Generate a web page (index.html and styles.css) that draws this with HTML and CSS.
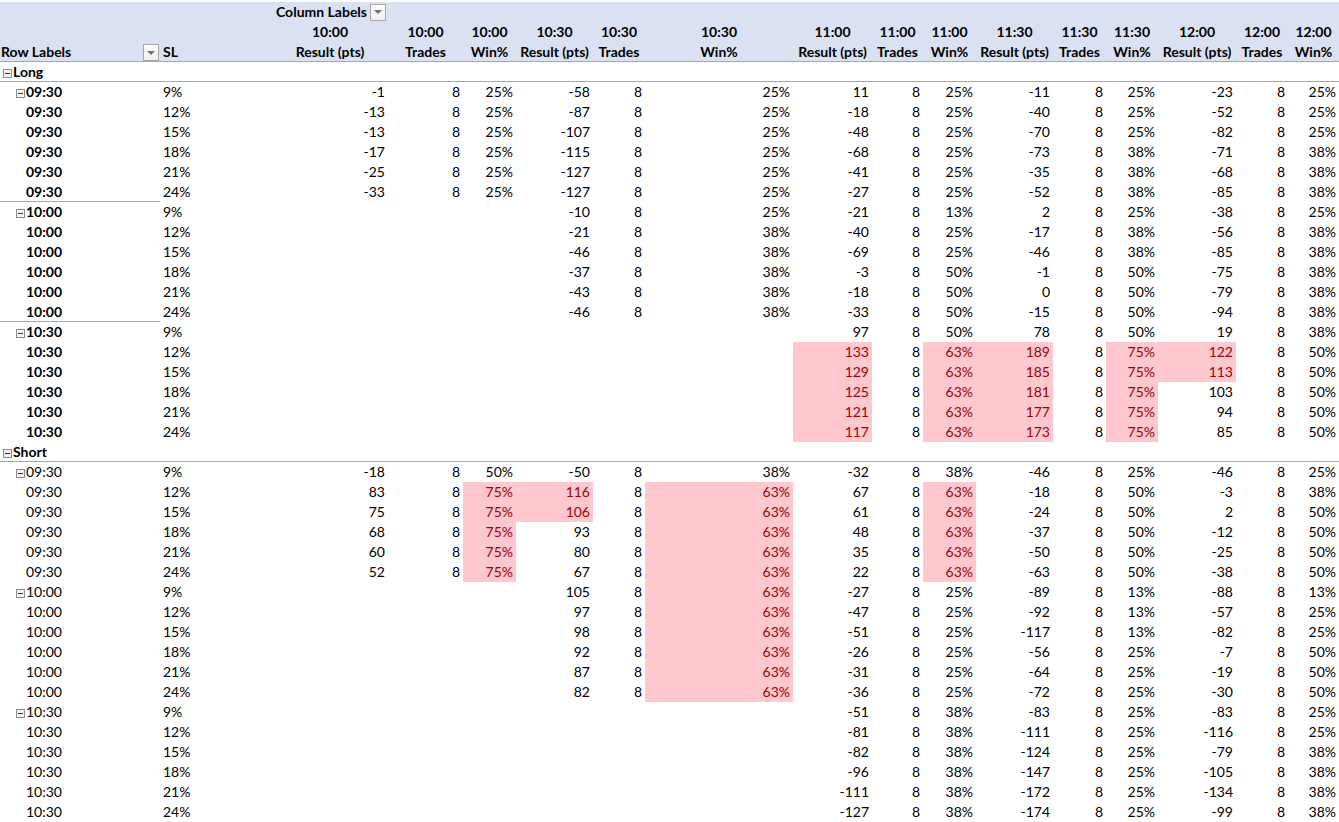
FILE: index.html
```html
<!DOCTYPE html>
<html>
<head>
<meta charset="utf-8">
<link rel="stylesheet" href="styles.css">
</head>
<body>
<table class="pivot">
<colgroup>
<col style="width:160px"><col style="width:112px"><col style="width:116px"><col style="width:75px"><col style="width:53px"><col style="width:77px"><col style="width:52px"><col style="width:148px"><col style="width:79px"><col style="width:51px"><col style="width:53px"><col style="width:77px"><col style="width:53px"><col style="width:52px"><col style="width:78px"><col style="width:52px"><col style="width:51px">
</colgroup>
<thead>
<tr class="hr1"><th></th><th></th><th class="cl"><div class="clwrap"><span>Column Labels</span><span class="dd"></span></div></th><th></th><th></th><th></th><th></th><th></th><th></th><th></th><th></th><th></th><th></th><th></th><th></th><th></th><th></th></tr>
<tr class="hr2">
<th class="rl"><div class="rlwrap"><span>Row Labels</span><span class="dd"></span></div></th>
<th class="sl">SL</th>
<th>10:00<br>Result (pts)</th><th>10:00<br>Trades</th><th>10:00<br>Win%</th>
<th>10:30<br>Result (pts)</th><th>10:30<br>Trades</th><th>10:30<br>Win%</th>
<th>11:00<br>Result (pts)</th><th>11:00<br>Trades</th><th>11:00<br>Win%</th>
<th>11:30<br>Result (pts)</th><th>11:30<br>Trades</th><th>11:30<br>Win%</th>
<th>12:00<br>Result (pts)</th><th>12:00<br>Trades</th><th>12:00<br>Win%</th>
</tr>
</thead>
<tbody>
<tr class="grp"><td class="l0 b"><span class="tog"></span>Long</td><td></td><td></td><td></td><td></td><td></td><td></td><td></td><td></td><td></td><td></td><td></td><td></td><td></td><td></td><td></td><td></td></tr>

<tr><td class="l1 b"><span class="tog"></span>09:30</td><td class="s">9%</td><td class="n">-1</td><td class="n">8</td><td class="n">25%</td><td class="n">-58</td><td class="n">8</td><td class="n">25%</td><td class="n">11</td><td class="n">8</td><td class="n">25%</td><td class="n">-11</td><td class="n">8</td><td class="n">25%</td><td class="n">-23</td><td class="n">8</td><td class="n">25%</td></tr>
<tr><td class="l2 b">09:30</td><td class="s">12%</td><td class="n">-13</td><td class="n">8</td><td class="n">25%</td><td class="n">-87</td><td class="n">8</td><td class="n">25%</td><td class="n">-18</td><td class="n">8</td><td class="n">25%</td><td class="n">-40</td><td class="n">8</td><td class="n">25%</td><td class="n">-52</td><td class="n">8</td><td class="n">25%</td></tr>
<tr><td class="l2 b">09:30</td><td class="s">15%</td><td class="n">-13</td><td class="n">8</td><td class="n">25%</td><td class="n">-107</td><td class="n">8</td><td class="n">25%</td><td class="n">-48</td><td class="n">8</td><td class="n">25%</td><td class="n">-70</td><td class="n">8</td><td class="n">25%</td><td class="n">-82</td><td class="n">8</td><td class="n">25%</td></tr>
<tr><td class="l2 b">09:30</td><td class="s">18%</td><td class="n">-17</td><td class="n">8</td><td class="n">25%</td><td class="n">-115</td><td class="n">8</td><td class="n">25%</td><td class="n">-68</td><td class="n">8</td><td class="n">25%</td><td class="n">-73</td><td class="n">8</td><td class="n">38%</td><td class="n">-71</td><td class="n">8</td><td class="n">38%</td></tr>
<tr><td class="l2 b">09:30</td><td class="s">21%</td><td class="n">-25</td><td class="n">8</td><td class="n">25%</td><td class="n">-127</td><td class="n">8</td><td class="n">25%</td><td class="n">-41</td><td class="n">8</td><td class="n">25%</td><td class="n">-35</td><td class="n">8</td><td class="n">38%</td><td class="n">-68</td><td class="n">8</td><td class="n">38%</td></tr>
<tr><td class="l2 b sep">09:30</td><td class="s">24%</td><td class="n">-33</td><td class="n">8</td><td class="n">25%</td><td class="n">-127</td><td class="n">8</td><td class="n">25%</td><td class="n">-27</td><td class="n">8</td><td class="n">25%</td><td class="n">-52</td><td class="n">8</td><td class="n">38%</td><td class="n">-85</td><td class="n">8</td><td class="n">38%</td></tr>

<tr><td class="l1 b"><span class="tog"></span>10:00</td><td class="s">9%</td><td></td><td></td><td></td><td class="n">-10</td><td class="n">8</td><td class="n">25%</td><td class="n">-21</td><td class="n">8</td><td class="n">13%</td><td class="n">2</td><td class="n">8</td><td class="n">25%</td><td class="n">-38</td><td class="n">8</td><td class="n">25%</td></tr>
<tr><td class="l2 b">10:00</td><td class="s">12%</td><td></td><td></td><td></td><td class="n">-21</td><td class="n">8</td><td class="n">38%</td><td class="n">-40</td><td class="n">8</td><td class="n">25%</td><td class="n">-17</td><td class="n">8</td><td class="n">38%</td><td class="n">-56</td><td class="n">8</td><td class="n">38%</td></tr>
<tr><td class="l2 b">10:00</td><td class="s">15%</td><td></td><td></td><td></td><td class="n">-46</td><td class="n">8</td><td class="n">38%</td><td class="n">-69</td><td class="n">8</td><td class="n">25%</td><td class="n">-46</td><td class="n">8</td><td class="n">38%</td><td class="n">-85</td><td class="n">8</td><td class="n">38%</td></tr>
<tr><td class="l2 b">10:00</td><td class="s">18%</td><td></td><td></td><td></td><td class="n">-37</td><td class="n">8</td><td class="n">38%</td><td class="n">-3</td><td class="n">8</td><td class="n">50%</td><td class="n">-1</td><td class="n">8</td><td class="n">50%</td><td class="n">-75</td><td class="n">8</td><td class="n">38%</td></tr>
<tr><td class="l2 b">10:00</td><td class="s">21%</td><td></td><td></td><td></td><td class="n">-43</td><td class="n">8</td><td class="n">38%</td><td class="n">-18</td><td class="n">8</td><td class="n">50%</td><td class="n">0</td><td class="n">8</td><td class="n">50%</td><td class="n">-79</td><td class="n">8</td><td class="n">38%</td></tr>
<tr><td class="l2 b sep">10:00</td><td class="s">24%</td><td></td><td></td><td></td><td class="n">-46</td><td class="n">8</td><td class="n">38%</td><td class="n">-33</td><td class="n">8</td><td class="n">50%</td><td class="n">-15</td><td class="n">8</td><td class="n">50%</td><td class="n">-94</td><td class="n">8</td><td class="n">38%</td></tr>

<tr><td class="l1 b"><span class="tog"></span>10:30</td><td class="s">9%</td><td></td><td></td><td></td><td></td><td></td><td></td><td class="n">97</td><td class="n">8</td><td class="n">50%</td><td class="n">78</td><td class="n">8</td><td class="n">50%</td><td class="n">19</td><td class="n">8</td><td class="n">38%</td></tr>
<tr><td class="l2 b">10:30</td><td class="s">12%</td><td></td><td></td><td></td><td></td><td></td><td></td><td class="n p">133</td><td class="n">8</td><td class="n p">63%</td><td class="n p">189</td><td class="n">8</td><td class="n p">75%</td><td class="n p">122</td><td class="n">8</td><td class="n">50%</td></tr>
<tr><td class="l2 b">10:30</td><td class="s">15%</td><td></td><td></td><td></td><td></td><td></td><td></td><td class="n p">129</td><td class="n">8</td><td class="n p">63%</td><td class="n p">185</td><td class="n">8</td><td class="n p">75%</td><td class="n p">113</td><td class="n">8</td><td class="n">50%</td></tr>
<tr><td class="l2 b">10:30</td><td class="s">18%</td><td></td><td></td><td></td><td></td><td></td><td></td><td class="n p">125</td><td class="n">8</td><td class="n p">63%</td><td class="n p">181</td><td class="n">8</td><td class="n p">75%</td><td class="n">103</td><td class="n">8</td><td class="n">50%</td></tr>
<tr><td class="l2 b">10:30</td><td class="s">21%</td><td></td><td></td><td></td><td></td><td></td><td></td><td class="n p">121</td><td class="n">8</td><td class="n p">63%</td><td class="n p">177</td><td class="n">8</td><td class="n p">75%</td><td class="n">94</td><td class="n">8</td><td class="n">50%</td></tr>
<tr><td class="l2 b">10:30</td><td class="s">24%</td><td></td><td></td><td></td><td></td><td></td><td></td><td class="n p">117</td><td class="n">8</td><td class="n p">63%</td><td class="n p">173</td><td class="n">8</td><td class="n p">75%</td><td class="n">85</td><td class="n">8</td><td class="n">50%</td></tr>

<tr class="grp"><td class="l0 b"><span class="tog"></span>Short</td><td></td><td></td><td></td><td></td><td></td><td></td><td></td><td></td><td></td><td></td><td></td><td></td><td></td><td></td><td></td><td></td></tr>

<tr><td class="l1"><span class="tog"></span>09:30</td><td class="s">9%</td><td class="n">-18</td><td class="n">8</td><td class="n">50%</td><td class="n">-50</td><td class="n">8</td><td class="n">38%</td><td class="n">-32</td><td class="n">8</td><td class="n">38%</td><td class="n">-46</td><td class="n">8</td><td class="n">25%</td><td class="n">-46</td><td class="n">8</td><td class="n">25%</td></tr>
<tr><td class="l2">09:30</td><td class="s">12%</td><td class="n">83</td><td class="n">8</td><td class="n p">75%</td><td class="n p">116</td><td class="n">8</td><td class="n p">63%</td><td class="n">67</td><td class="n">8</td><td class="n p">63%</td><td class="n">-18</td><td class="n">8</td><td class="n">50%</td><td class="n">-3</td><td class="n">8</td><td class="n">38%</td></tr>
<tr><td class="l2">09:30</td><td class="s">15%</td><td class="n">75</td><td class="n">8</td><td class="n p">75%</td><td class="n p">106</td><td class="n">8</td><td class="n p">63%</td><td class="n">61</td><td class="n">8</td><td class="n p">63%</td><td class="n">-24</td><td class="n">8</td><td class="n">50%</td><td class="n">2</td><td class="n">8</td><td class="n">50%</td></tr>
<tr><td class="l2">09:30</td><td class="s">18%</td><td class="n">68</td><td class="n">8</td><td class="n p">75%</td><td class="n">93</td><td class="n">8</td><td class="n p">63%</td><td class="n">48</td><td class="n">8</td><td class="n p">63%</td><td class="n">-37</td><td class="n">8</td><td class="n">50%</td><td class="n">-12</td><td class="n">8</td><td class="n">50%</td></tr>
<tr><td class="l2">09:30</td><td class="s">21%</td><td class="n">60</td><td class="n">8</td><td class="n p">75%</td><td class="n">80</td><td class="n">8</td><td class="n p">63%</td><td class="n">35</td><td class="n">8</td><td class="n p">63%</td><td class="n">-50</td><td class="n">8</td><td class="n">50%</td><td class="n">-25</td><td class="n">8</td><td class="n">50%</td></tr>
<tr><td class="l2">09:30</td><td class="s">24%</td><td class="n">52</td><td class="n">8</td><td class="n p">75%</td><td class="n">67</td><td class="n">8</td><td class="n p">63%</td><td class="n">22</td><td class="n">8</td><td class="n p">63%</td><td class="n">-63</td><td class="n">8</td><td class="n">50%</td><td class="n">-38</td><td class="n">8</td><td class="n">50%</td></tr>

<tr><td class="l1"><span class="tog"></span>10:00</td><td class="s">9%</td><td></td><td></td><td></td><td class="n">105</td><td class="n">8</td><td class="n p">63%</td><td class="n">-27</td><td class="n">8</td><td class="n">25%</td><td class="n">-89</td><td class="n">8</td><td class="n">13%</td><td class="n">-88</td><td class="n">8</td><td class="n">13%</td></tr>
<tr><td class="l2">10:00</td><td class="s">12%</td><td></td><td></td><td></td><td class="n">97</td><td class="n">8</td><td class="n p">63%</td><td class="n">-47</td><td class="n">8</td><td class="n">25%</td><td class="n">-92</td><td class="n">8</td><td class="n">13%</td><td class="n">-57</td><td class="n">8</td><td class="n">25%</td></tr>
<tr><td class="l2">10:00</td><td class="s">15%</td><td></td><td></td><td></td><td class="n">98</td><td class="n">8</td><td class="n p">63%</td><td class="n">-51</td><td class="n">8</td><td class="n">25%</td><td class="n">-117</td><td class="n">8</td><td class="n">13%</td><td class="n">-82</td><td class="n">8</td><td class="n">25%</td></tr>
<tr><td class="l2">10:00</td><td class="s">18%</td><td></td><td></td><td></td><td class="n">92</td><td class="n">8</td><td class="n p">63%</td><td class="n">-26</td><td class="n">8</td><td class="n">25%</td><td class="n">-56</td><td class="n">8</td><td class="n">25%</td><td class="n">-7</td><td class="n">8</td><td class="n">50%</td></tr>
<tr><td class="l2">10:00</td><td class="s">21%</td><td></td><td></td><td></td><td class="n">87</td><td class="n">8</td><td class="n p">63%</td><td class="n">-31</td><td class="n">8</td><td class="n">25%</td><td class="n">-64</td><td class="n">8</td><td class="n">25%</td><td class="n">-19</td><td class="n">8</td><td class="n">50%</td></tr>
<tr><td class="l2">10:00</td><td class="s">24%</td><td></td><td></td><td></td><td class="n">82</td><td class="n">8</td><td class="n p">63%</td><td class="n">-36</td><td class="n">8</td><td class="n">25%</td><td class="n">-72</td><td class="n">8</td><td class="n">25%</td><td class="n">-30</td><td class="n">8</td><td class="n">50%</td></tr>

<tr><td class="l1"><span class="tog"></span>10:30</td><td class="s">9%</td><td></td><td></td><td></td><td></td><td></td><td></td><td class="n">-51</td><td class="n">8</td><td class="n">38%</td><td class="n">-83</td><td class="n">8</td><td class="n">25%</td><td class="n">-83</td><td class="n">8</td><td class="n">25%</td></tr>
<tr><td class="l2">10:30</td><td class="s">12%</td><td></td><td></td><td></td><td></td><td></td><td></td><td class="n">-81</td><td class="n">8</td><td class="n">38%</td><td class="n">-111</td><td class="n">8</td><td class="n">25%</td><td class="n">-116</td><td class="n">8</td><td class="n">25%</td></tr>
<tr><td class="l2">10:30</td><td class="s">15%</td><td></td><td></td><td></td><td></td><td></td><td></td><td class="n">-82</td><td class="n">8</td><td class="n">38%</td><td class="n">-124</td><td class="n">8</td><td class="n">25%</td><td class="n">-79</td><td class="n">8</td><td class="n">38%</td></tr>
<tr><td class="l2">10:30</td><td class="s">18%</td><td></td><td></td><td></td><td></td><td></td><td></td><td class="n">-96</td><td class="n">8</td><td class="n">38%</td><td class="n">-147</td><td class="n">8</td><td class="n">25%</td><td class="n">-105</td><td class="n">8</td><td class="n">38%</td></tr>
<tr><td class="l2">10:30</td><td class="s">21%</td><td></td><td></td><td></td><td></td><td></td><td></td><td class="n">-111</td><td class="n">8</td><td class="n">38%</td><td class="n">-172</td><td class="n">8</td><td class="n">25%</td><td class="n">-134</td><td class="n">8</td><td class="n">38%</td></tr>
<tr><td class="l2">10:30</td><td class="s">24%</td><td></td><td></td><td></td><td></td><td></td><td></td><td class="n">-127</td><td class="n">8</td><td class="n">38%</td><td class="n">-174</td><td class="n">8</td><td class="n">25%</td><td class="n">-99</td><td class="n">8</td><td class="n">38%</td></tr>
</tbody>
</table>
</body>
</html>
```
FILE: styles.css
```css
html, body {
  margin: 0;
  padding: 0;
  background: #ffffff;
}
body {
  padding-top: 2px;
  font-family: Lato, "Liberation Sans", sans-serif;
  font-size: 14px;
  color: #000000;
}
.pivot {
  border-collapse: separate;
  border-spacing: 0;
  table-layout: fixed;
  width: 1339px;
}
.pivot th,
.pivot td {
  padding: 0 3px;
  height: 20px;
  line-height: 20px;
  white-space: nowrap;
  overflow: hidden;
  box-sizing: border-box;
}
.pivot thead th {
  background: #d9e1f2;
  font-weight: bold;
  text-align: center;
  vertical-align: bottom;
}
.hr2 th {
  height: 40px;
  box-shadow: inset 0 -1px #8ea9db;
}
.pivot thead th.sl {
  text-align: left;
}
.pivot thead th.rl {
  padding: 0 1px 1px 1px;
  text-align: left;
}
.rlwrap {
  display: flex;
  align-items: flex-end;
  justify-content: space-between;
  line-height: 19px;
}
.pivot thead th.cl {
  padding: 0 2px 0 4px;
  text-align: left;
  vertical-align: middle;
}
.clwrap {
  display: flex;
  align-items: center;
  justify-content: space-between;
}
.dd {
  display: inline-flex;
  align-items: center;
  justify-content: center;
  width: 16px;
  height: 17px;
  box-sizing: border-box;
  border: 1px solid #a6a6a6;
  background: linear-gradient(#ffffff, #eeeeee);
}
.dd::after {
  content: "";
  width: 0;
  height: 0;
  border-left: 4px solid transparent;
  border-right: 4px solid transparent;
  border-top: 4px solid #707070;
}
.pivot td.n {
  text-align: right;
}
.pivot td.s {
  text-align: left;
}
.pivot td.b {
  font-weight: bold;
}
.pivot td.p {
  background: #ffc7ce;
  color: #9c0006;
}
.pivot td.l0 {
  padding-left: 3px;
}
.pivot td.l1 {
  padding-left: 16px;
}
.pivot td.l2 {
  padding-left: 26px;
}
.grp td {
  box-shadow: inset 0 -1px #8ea9db;
}
.pivot td.sep {
  box-shadow: inset 0 -1px #8ea9db;
}
.tog {
  display: inline-block;
  position: relative;
  width: 9px;
  height: 9px;
  box-sizing: border-box;
  border: 1px solid #8c8c8c;
  background: #f2f2f2;
  margin-right: 1px;
  vertical-align: -1px;
}
.tog::after {
  content: "";
  position: absolute;
  left: 1px;
  top: 3px;
  width: 5px;
  height: 1px;
  background: #333333;
}
```
